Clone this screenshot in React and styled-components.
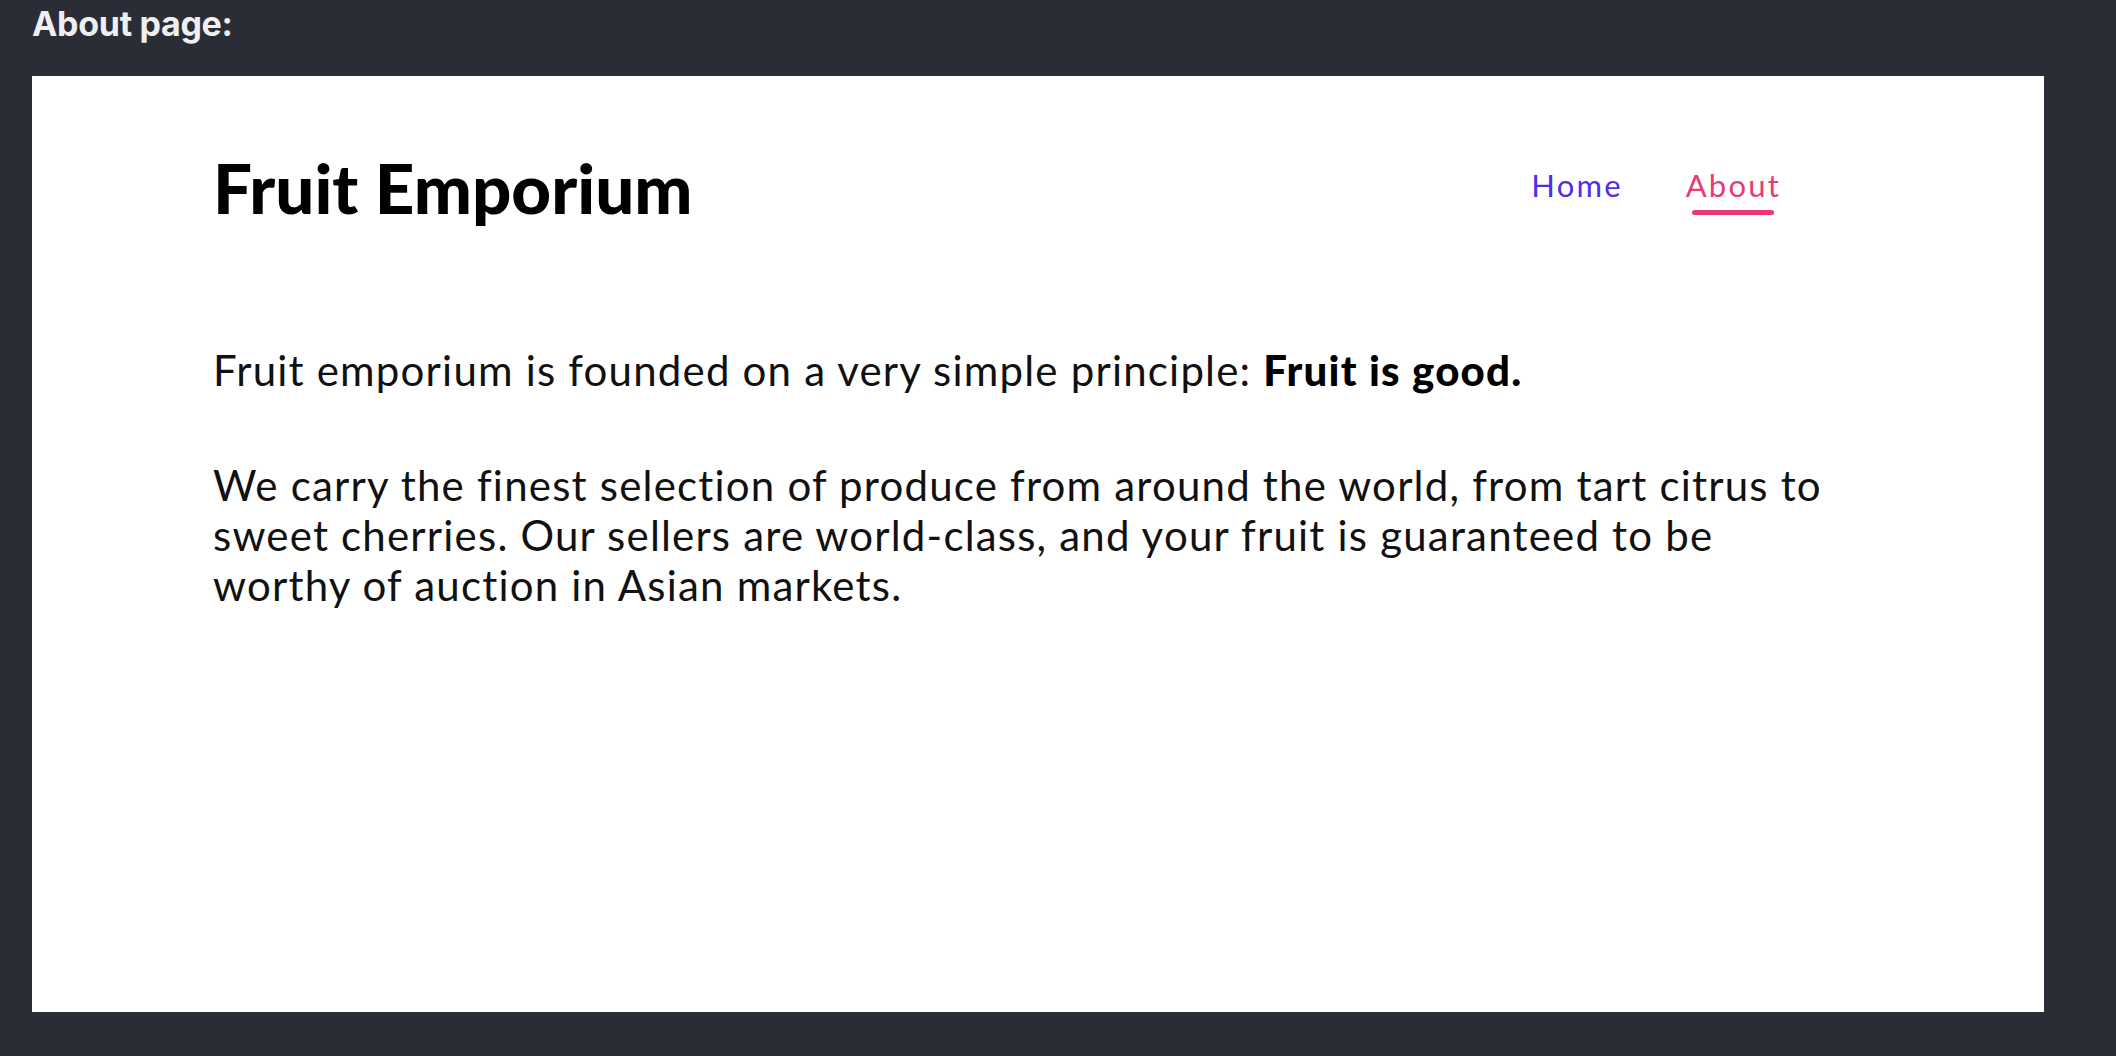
import React from 'react';
import styled, { createGlobalStyle } from 'styled-components';

const GlobalStyle = createGlobalStyle`
    html, body {
        margin: 0;
        padding: 0;
        background: #2a2d36;
    }
    body {
        font-family: Lato, "Liberation Sans", sans-serif;
    }
`

const Page = styled.div`
    width: 2116px;
    height: 1056px;
    padding: 0 32px;
    box-sizing: border-box;
    display: flex;
    flex-direction: column;
`

const Label = styled.h2`
    margin: 0;
    height: 76px;
    padding-top: 4px;
    box-sizing: border-box;
    font-family: Inter, "Liberation Sans", sans-serif;
    font-weight: 700;
    font-size: 34px;
    line-height: 40px;
    letter-spacing: -0.3px;
    color: #eeeff1;
`

const Frame = styled.div`
    width: 2012px;
    height: 936px;
    background: #fff;
    padding: 0 181px;
    box-sizing: border-box;
    color: #111;
`

const Header = styled.header`
    display: flex;
    justify-content: space-between;
    align-items: center;
    padding-top: 77px;
`

const Logo = styled.h1`
    margin: 0;
    font-family: Lato, sans-serif;
    font-weight: 900;
    font-size: 69px;
    line-height: 69px;
    color: #000;
`

const Nav = styled.nav`
    display: flex;
    gap: 63px;
    padding-right: 82px;
    margin-bottom: 5px;
`

const NavLink = styled.a`
    position: relative;
    font-family: Lato, sans-serif;
    font-size: 31px;
    line-height: 34px;
    letter-spacing: 2.2px;
    text-decoration: none;
    color: ${p => (p.$active ? '#e93a75' : '#4e2fe6')};

    &::after {
        content: '';
        display: ${p => (p.$active ? 'block' : 'none')};
        position: absolute;
        left: 6px;
        right: 7px;
        bottom: -13px;
        height: 5px;
        border-radius: 3px;
        background: #e93a75;
    }
`

const Content = styled.main`
    padding-top: 123px;
`

const Paragraph = styled.p`
    margin: 0 0 65px;
    max-width: 1620px;
    font-family: Lato, sans-serif;
    font-size: 42px;
    line-height: 50px;
    letter-spacing: 1.2px;
    color: #111;

    strong {
        font-weight: 900;
        color: #000;
    }
`

const App = () => {
    return (
        <>
            <GlobalStyle />
            <Page>
                <Label>About page:</Label>
                <Frame>
                    <Header>
                        <Logo>Fruit Emporium</Logo>
                        <Nav>
                            <NavLink href="#">Home</NavLink>
                            <NavLink href="#" $active>About</NavLink>
                        </Nav>
                    </Header>
                    <Content>
                        <Paragraph>
                            Fruit emporium is founded on a very simple principle: <strong>Fruit is good.</strong>
                        </Paragraph>
                        <Paragraph>
                            We carry the finest selection of produce from around the world, from tart citrus to sweet cherries. Our sellers are world-class, and your fruit is guaranteed to be worthy of auction in Asian markets.
                        </Paragraph>
                    </Content>
                </Frame>
            </Page>
        </>
    )
}

export default App
